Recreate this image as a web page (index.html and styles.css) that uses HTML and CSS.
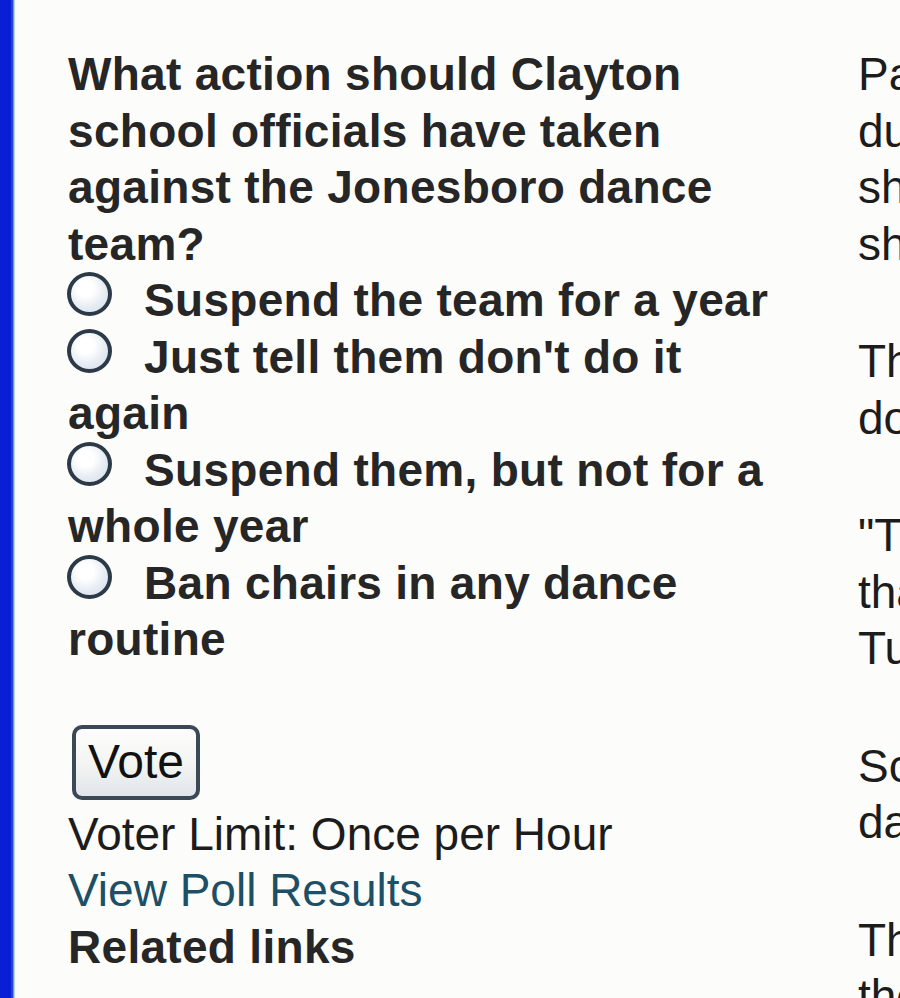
FILE: index.html
```html
<!DOCTYPE html>
<html>
<head>
<meta charset="utf-8">
<title>Poll</title>
<link rel="stylesheet" href="styles.css">
</head>
<body>
<div class="page">
  <div class="left">
    <form class="poll">
      <div class="question">What action should Clayton school officials have taken against the Jonesboro dance team?</div>
      <div class="option"><input type="radio" name="a" class="radio"><span>Suspend the team for a year</span></div>
      <div class="option"><input type="radio" name="a" class="radio"><span>Just tell them don't do it again</span></div>
      <div class="option"><input type="radio" name="a" class="radio"><span>Suspend them, but not for a whole year</span></div>
      <div class="option"><input type="radio" name="a" class="radio"><span>Ban chairs in any dance routine</span></div>
      <button type="button" class="vote">Vote</button>
      <div class="info">
        <div>Voter Limit: Once per Hour</div>
        <a class="results" href="#">View Poll Results</a>
        <div class="related">Related links</div>
      </div>
    </form>
  </div>
  <div class="right">
    <p>Parents of the dancers said the girls were<br>dumbfounded when they heard the<br>show had been flagged and that they<br>should not have been punished at all.</p>
    <p>The routine was performed at a<br>dozen events without complaint.</p>
    <p>"The girls worked so hard on<br>that," one mother said on<br>Tuesday after the decision.</p>
    <p>School officials declined to<br>date to discuss the matter.</p>
    <p>The team will meet with<br>the district next week.</p>
  </div>
</div>
</body>
</html>
```

FILE: styles.css
```css
html, body {
  margin: 0;
  padding: 0;
  overflow: hidden;
  height: 998px;
}

body {
  background: linear-gradient(to right,
    #0a1ed6 0 11px,
    #1d44df 11px 13px,
    #6c9ce8 13px 14px,
    #bcd6f4 14px 15px,
    #fcfcfa 15px);
  font-family: "Liberation Sans", Arial, sans-serif;
  font-size: 46px;
  line-height: 56.5px;
  color: #1c1c1c;
}

.page {
  display: flex;
  gap: 64px;
  padding: 46px 0 0 68px;
}

.left {
  flex: none;
  width: 725px;
}

.question,
.option,
.related {
  font-weight: bold;
  color: #262626;
  letter-spacing: 0.3px;
}

.radio {
  appearance: none;
  -webkit-appearance: none;
  box-sizing: border-box;
  width: 45px;
  height: 44px;
  margin: 0 32px 0 -1px;
  padding: 0;
  border: 4px solid #2c3a48;
  border-radius: 50%;
  background: radial-gradient(circle at 40% 35%, #ffffff 0 25%, #e9eef4 55%, #cfdbe8 100%);
  vertical-align: baseline;
}

.vote {
  display: block;
  box-sizing: border-box;
  margin: 57px 0 0 4px;
  width: 128px;
  height: 75px;
  padding: 0;
  border: 4px solid #3a4857;
  border-radius: 10px;
  background: linear-gradient(to bottom, #fdfdfd 0%, #f3f3f1 55%, #dfe5ec 100%);
  font-family: "Liberation Sans", Arial, sans-serif;
  font-size: 48px;
  line-height: 1;
  color: #111;
}

.info {
  margin-top: 6px;
}

.results {
  display: block;
  color: #1d4f66;
  text-decoration: none;
}

.right {
  flex: none;
  white-space: nowrap;
  padding-left: 1px;
}

.right p {
  margin: 0 0 61px 0;
}
```
